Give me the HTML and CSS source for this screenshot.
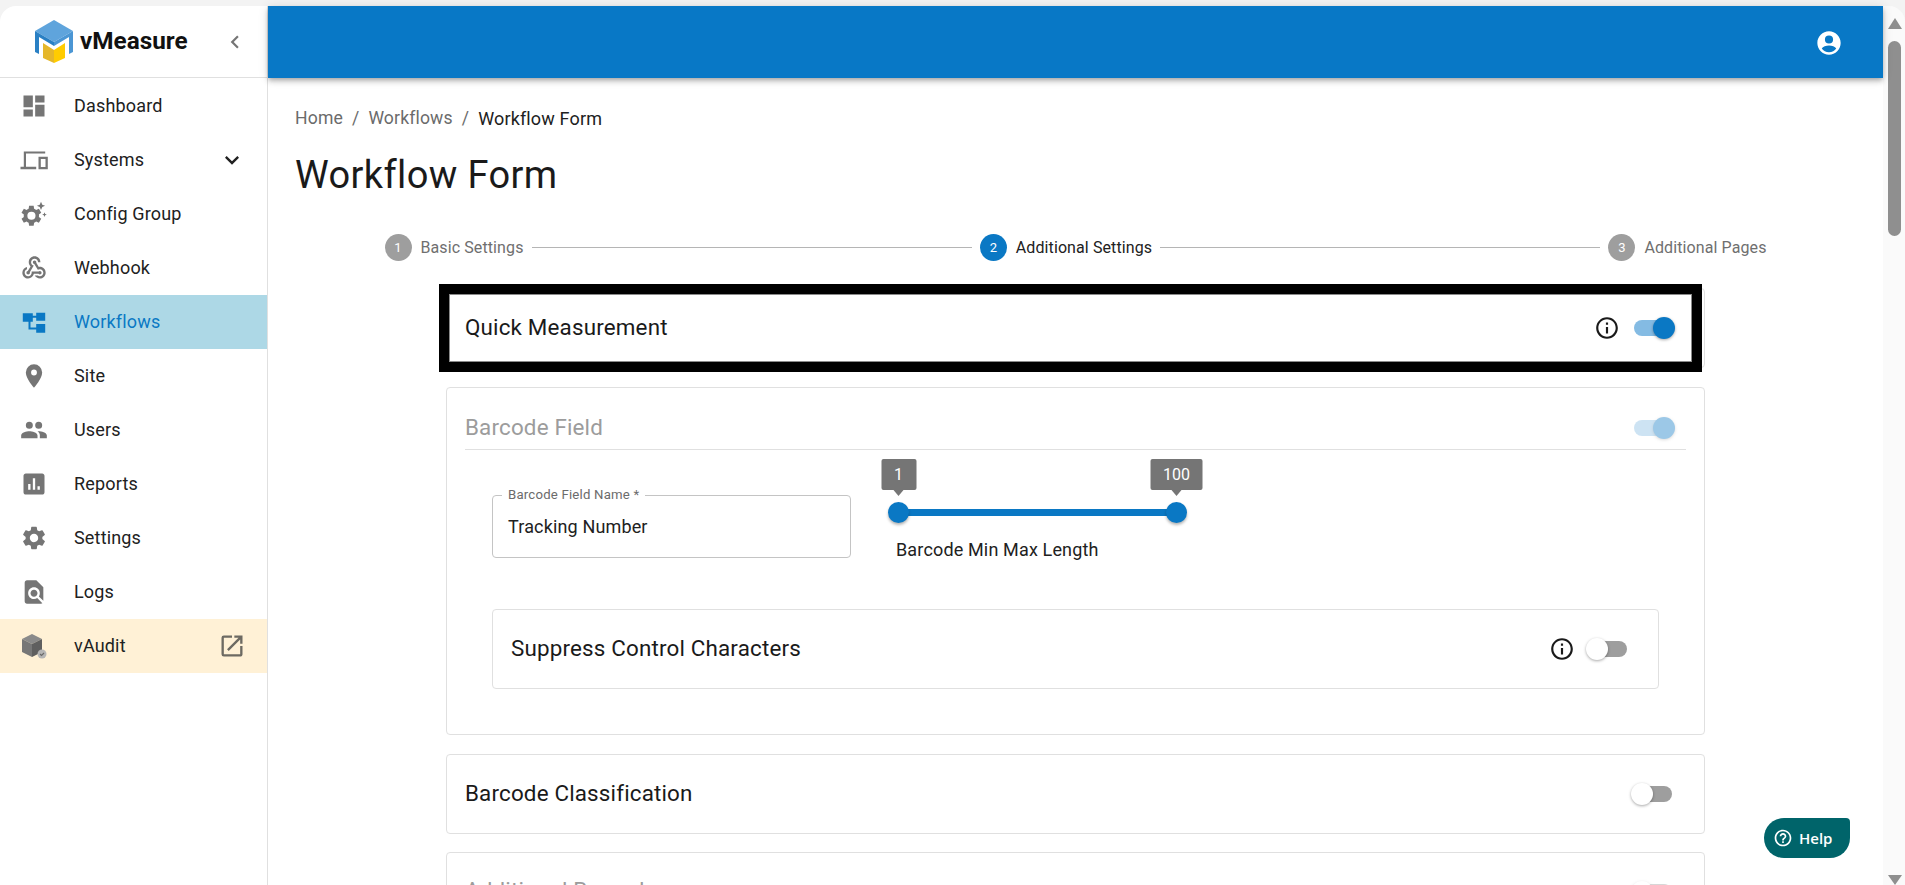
FILE: index.html
```html
<!DOCTYPE html>
<html lang="en">
<head>
<meta charset="utf-8">
<title>Workflow Form</title>
<link rel="stylesheet" href="styles.css">
</head>
<body>
<div class="window">
  <aside class="sidebar">
    <div class="brand">
      <svg class="logo" viewBox="0 0 40 45" width="40" height="45">
        <path d="M20 1 39 12 20 23 1 12Z" fill="#5fa4dc"/>
        <path d="M1 12 20 23v4L5 18v17l-4-2Z" fill="#2a80c4"/>
        <path d="M39 12 20 23v4l15-9v17l4-2Z" fill="#4b96d4"/>
        <path d="M9 24 20 31v13L9 39Z" fill="#e5b72a"/>
        <path d="M31 24 20 31v13l11-5Z" fill="#ffcc00"/>
      </svg>
      <span class="brand-name">vMeasure</span>
      <svg class="collapse" viewBox="0 0 24 24" width="26" height="26"><path d="M15.410 7.410 14 6l-6 6 6 6 1.410-1.410L10.830 12z"/></svg>
    </div>
    <nav class="nav">
      <a class="item"><svg class="ico" viewBox="0 0 24 24"><path d="M3 13h8V3H3v10zm0 8h8v-6H3v6zm10 0h8V11h-8v10zm0-18v6h8V3h-8z"/></svg><span>Dashboard</span></a>
      <a class="item"><svg class="ico" viewBox="0 0 28 28"><path fill-rule="evenodd" d="M3.800 5.500H25.200V7.500H6V20.700H16.200V23.300H.5V20.700H3.800ZM18.500 10.700H27.800V23.300H18.500ZM20.800 13V21H25.500V13Z"/></svg><span>Systems</span><svg class="trail chev" viewBox="0 0 24 24"><path d="M7.410 8.590 12 13.170l4.590-4.580L18 10l-6 6-6-6z"/></svg></a>
      <a class="item"><svg class="ico" viewBox="1 0 24 24"><path d="M19 1.500 20.100 4l2.400 1-2.400 1.100L19 8.500 17.900 6.100 15.500 5l2.400-1zM22 10.500l.6 1.400 1.400.6-1.400.6-.6 1.400-.6-1.400-1.400-.6 1.400-.6zM17.200 14.500c0-.3.1-.7.1-1s0-.7-.1-1l2-1.600-2-3.400-2.400 1a7 7 0 0 0-1.700-1L12.700 5H8.800l-.4 2.500a7 7 0 0 0-1.700 1l-2.400-1-2 3.400 2 1.600c0 .3-.1.700-.1 1s0 .7.100 1l-2 1.600 2 3.400 2.400-1c.5.4 1.100.7 1.700 1l.4 2.500h3.900l.4-2.500c.6-.3 1.200-.6 1.700-1l2.400 1 2-3.400zM10.800 17a3.500 3.500 0 1 1 0-7 3.500 3.500 0 0 1 0 7z"/></svg><span>Config Group</span></a>
      <a class="item"><svg class="ico" viewBox="0 0 24 24"><path d="M10,15l5.880,0c0.270-0.310,0.670-0.500,1.120-0.500c0.830,0,1.500,0.670,1.500,1.500c0,0.830-0.670,1.500-1.500,1.500c-0.440,0-0.840-0.190-1.120-0.500l-3.980,0c-0.460,2.280-2.480,4-4.900,4c-2.760,0-5-2.240-5-5c0-2.420,1.720-4.440,4-4.900l0,2.070C4.840,13.580,4,14.700,4,16c0,1.650,1.350,3,3,3S10,17.650,10,16V15z M12.500,4c1.650,0,3,1.350,3,3h2c0-2.760-2.240-5-5-5l0,0c-2.760,0-5,2.240-5,5c0,1.430,0.600,2.710,1.550,3.620l-2.350,3.900C6.020,14.660,5.500,15.270,5.500,16c0,0.830,0.670,1.500,1.500,1.500s1.500-0.670,1.500-1.500c0-0.160-0.020-0.310-0.070-0.450l3.380-5.630C10.490,9.610,9.500,8.420,9.500,7C9.500,5.350,10.850,4,12.500,4z M17,13c-0.640,0-1.230,0.200-1.720,0.540l-3.050-5.070C11.530,8.350,11,7.740,11,7c0-0.830,0.670-1.500,1.500-1.500S14,6.170,14,7c0,0.150-0.020,0.290-0.060,0.430l2.190,3.650C16.410,11.030,16.700,11,17,11l0,0c2.760,0,5,2.240,5,5c0,2.760-2.240,5-5,5c-1.850,0-3.470-1.010-4.330-2.500l2.670,0C15.820,18.820,16.390,19,17,19c1.650,0,3-1.350,3-3S18.650,13,17,13z"/></svg><span>Webhook</span></a>
      <a class="item active"><svg class="ico" viewBox="0 0 28 28"><path d="M2.800 5.300h10v8.400h-2.300v5.800h5.700v-3.500h9v8.700h-9v-3.200h-7.700v-7.800H2.800zM12.800 7.800h3.400V4.700h9v8h-9V9.800h-3.400z"/></svg><span>Workflows</span></a>
      <a class="item"><svg class="ico" viewBox="0 0 24 24"><path d="M12 2a7 7 0 0 0-7 7c0 5.250 7 13 7 13s7-7.750 7-13a7 7 0 0 0-7-7zm0 9.500a2.500 2.500 0 1 1 0-5 2.500 2.500 0 0 1 0 5z"/></svg><span>Site</span></a>
      <a class="item"><svg class="ico" viewBox="0 0 24 24"><path d="M16 11a3 3 0 1 0 0-6 3 3 0 0 0 0 6zm-8 0a3 3 0 1 0 0-6 3 3 0 0 0 0 6zm0 2c-2.330 0-7 1.170-7 3.500V19h14v-2.500C15 14.170 10.330 13 8 13zm8 0c-.29 0-.62.020-.97.050C16.190 13.890 17 15.020 17 16.500V19h6v-2.500c0-2.330-4.670-3.500-7-3.500z"/></svg><span>Users</span></a>
      <a class="item"><svg class="ico" viewBox="0 0 24 24"><path d="M19 3H5c-1.100 0-2 .9-2 2v14c0 1.100.9 2 2 2h14c1.100 0 2-.9 2-2V5c0-1.100-.9-2-2-2zM9 17H7v-5h2v5zm4 0h-2V7h2v10zm4 0h-2v-3h2v3z"/></svg><span>Reports</span></a>
      <a class="item"><svg class="ico" viewBox="0 0 24 24"><path d="M19.140 12.940c.04-.3.060-.61.060-.94 0-.32-.02-.64-.07-.94l2.030-1.580a.49.49 0 0 0 .12-.61l-1.920-3.320a.488.488 0 0 0-.59-.22l-2.390.96c-.5-.38-1.030-.7-1.620-.94l-.36-2.540a.484.484 0 0 0-.48-.41h-3.840c-.24 0-.43.17-.47.41l-.36 2.540c-.59.24-1.130.57-1.620.94l-2.390-.96c-.22-.08-.47 0-.59.22L2.740 8.870c-.12.21-.08.47.12.61l2.030 1.580c-.05.3-.09.63-.09.94s.020.64.070.94l-2.030 1.580a.49.49 0 0 0-.12.61l1.920 3.320c.12.22.37.29.59.22l2.390-.96c.5.38 1.030.7 1.620.94l.36 2.540c.05.24.24.41.48.41h3.840c.24 0 .44-.17.47-.41l.36-2.540c.59-.24 1.130-.56 1.620-.94l2.390.96c.22.08.47 0 .59-.22l1.920-3.320c.12-.22.070-.47-.12-.61l-2.010-1.580zM12 15.600A3.610 3.610 0 0 1 8.400 12c0-1.980 1.620-3.600 3.600-3.600s3.600 1.620 3.600 3.600-1.620 3.600-3.600 3.600z"/></svg><span>Settings</span></a>
      <a class="item"><svg class="ico" viewBox="0 0 24 24"><path d="M20 19.590V8l-6-6H6c-1.100 0-1.990.9-1.990 2L4 20c0 1.100.89 2 1.990 2H18c.45 0 .85-.15 1.190-.4l-4.430-4.430c-.8.520-1.740.83-2.760.83-2.760 0-5-2.240-5-5s2.240-5 5-5 5 2.240 5 5c0 1.020-.31 1.960-.83 2.770L20 19.590zM9 13c0 1.660 1.340 3 3 3s3-1.340 3-3-1.340-3-3-3-3 1.340-3 3z"/></svg><span>Logs</span></a>
      <a class="item audit"><svg class="ico" viewBox="0 0 28 28"><path d="M12 2 22 7 12 12 2 7Z" fill="#8a8a8a"/><path d="M2 7l10 5v13L2 20Z" fill="#777"/><path d="M22 7 12 12v13l10-5Z" fill="#5f5f5f"/><circle cx="22" cy="22" r="4.500" fill="#b5b5b5"/><path d="M20 22l1.500 1.500 2.500-2.500" fill="none" stroke="#6a6a6a" stroke-width="1.200"/></svg><span>vAudit</span><svg class="trail launch" viewBox="0 0 24 24"><path d="M19 19H5V5h7V3H5a2 2 0 0 0-2 2v14a2 2 0 0 0 2 2h14c1.100 0 2-.9 2-2v-7h-2v7zM14 3v2h3.590l-9.830 9.830 1.410 1.410L19 6.410V10h2V3h-7z"/></svg></a>
    </nav>
  </aside>

  <div class="column">
    <header class="appbar">
      <svg class="account" viewBox="0 0 24 24" width="28" height="28"><path d="M12 2C6.480 2 2 6.480 2 12s4.480 10 10 10 10-4.480 10-10S17.520 2 12 2zm0 3.500a3.500 3.500 0 1 1 0 7 3.500 3.500 0 0 1 0-7zM12 20c-2.600 0-4.900-1.300-6.200-3.300.9-1.500 3.700-2.500 6.200-2.500s5.300 1 6.200 2.500C16.900 18.700 14.600 20 12 20z"/></svg>
    </header>
    <main class="main">
      <div class="crumbs">
        <span class="crumb">Home</span><span class="sep">/</span>
        <span class="crumb">Workflows</span><span class="sep">/</span>
        <span class="crumb current">Workflow Form</span>
      </div>
      <h1 class="title">Workflow Form</h1>

      <div class="stepper">
        <div class="step"><span class="dot">1</span><span class="step-label">Basic Settings</span></div>
        <span class="step-line"></span>
        <div class="step on"><span class="dot">2</span><span class="step-label">Additional Settings</span></div>
        <span class="step-line"></span>
        <div class="step"><span class="dot">3</span><span class="step-label">Additional Pages</span></div>
      </div>

      <div class="stack">
        <section class="card row-card">
          <span class="focus-frame"></span>
          <h2 class="card-title">Quick Measurement</h2>
          <svg class="info" viewBox="0 0 24 24"><path d="M11 7h2v2h-2zm0 4h2v6h-2zm1-9C6.480 2 2 6.480 2 12s4.480 10 10 10 10-4.480 10-10S17.520 2 12 2zm0 18c-4.410 0-8-3.590-8-8s3.590-8 8-8 8 3.590 8 8-3.590 8-8 8z"/></svg>
          <span class="switch checked"><i></i></span>
        </section>

        <section class="card field-card">
          <div class="field-head">
            <h2 class="card-title muted">Barcode Field</h2>
            <span class="switch checked faded"><i></i></span>
          </div>
          <div class="field-body">
            <div class="outlined">
              <span class="outlined-label">Barcode Field Name *</span>
              <span class="outlined-value">Tracking Number</span>
            </div>
            <div class="slider">
              <div class="track">
                <span class="thumb start"><b class="tip">1</b></span>
                <span class="thumb end"><b class="tip">100</b></span>
              </div>
              <div class="slider-label">Barcode Min Max Length</div>
            </div>
          </div>
          <div class="card row-card inner">
            <h2 class="card-title">Suppress Control Characters</h2>
            <svg class="info" viewBox="0 0 24 24"><path d="M11 7h2v2h-2zm0 4h2v6h-2zm1-9C6.480 2 2 6.480 2 12s4.480 10 10 10 10-4.480 10-10S17.520 2 12 2zm0 18c-4.410 0-8-3.590-8-8s3.590-8 8-8 8 3.590 8 8-3.590 8-8 8z"/></svg>
            <span class="switch"><i></i></span>
          </div>
        </section>

        <section class="card row-card">
          <h2 class="card-title">Barcode Classification</h2>
          <span class="switch"><i></i></span>
        </section>

        <section class="card row-card last">
          <h2 class="card-title muted">Additional Records</h2>
          <span class="switch faded"><i></i></span>
        </section>
      </div>
    </main>
    <button class="help"><svg viewBox="0 0 24 24" width="20" height="20"><path d="M11 18h2v-2h-2v2zm1-16C6.480 2 2 6.480 2 12s4.480 10 10 10 10-4.480 10-10S17.520 2 12 2zm0 18c-4.410 0-8-3.590-8-8s3.590-8 8-8 8 3.590 8 8-3.590 8-8 8zm0-14c-2.210 0-4 1.790-4 4h2c0-1.100.9-2 2-2s2 .9 2 2c0 2-3 1.750-3 5h2c0-2.250 3-2.500 3-5 0-2.210-1.790-4-4-4z"/></svg><span>Help</span></button>
  </div>

  <div class="scrollbar">
    <span class="arrow up"></span>
    <span class="bar"></span>
    <span class="arrow down"></span>
  </div>
</div>
</body>
</html>
```
FILE: styles.css
```css
* { box-sizing: border-box; }
html, body { height: 100%; margin: 0; }
body { background: #f3f3f3; overflow: hidden; font-family: Roboto, sans-serif; color: #1a1a1a; }
.window { display: flex; height: 885px; padding-top: 6px; }
.sidebar { width: 268px; flex: none; background: #fff; border-right: 1px solid #e0e0e0; border-top-left-radius: 16px; }
.brand { height: 72px; border-bottom: 1px solid #e0e0e0; display: flex; align-items: center; padding-left: 34px; position: relative; }
.logo { flex: none; margin-top: -1px; }
.brand-name { font-size: 24.300px; font-weight: 700; color: #111; margin-left: 6px; margin-top: -3px; }
.collapse { fill: #757575; position: absolute; left: 222px; top: 23px; }
.nav { display: flex; flex-direction: column; margin-top: 1px; }
.item { height: 54px; display: flex; align-items: center; padding-left: 20px; padding-right: 21px; font-size: 18px; letter-spacing: .17px; color: #212121; }
.item span { margin-top: -2px; }
.ico { width: 28px; height: 28px; fill: #757575; flex: none; margin-right: 26px; }
.trail { margin-left: auto; flex: none; }
.chev { width: 28px; height: 28px; fill: #212121; }
.launch { width: 28px; height: 28px; fill: #6d6a62; }
.item.active { background: #add8e6; color: #0a78c4; }
.item.active .ico { fill: #0a78c4; }
.item.audit { background: #fff1d6; }
.column { flex: 1; min-width: 0; display: flex; flex-direction: column; background: #fff; position: relative; }
.appbar { height: 72px; flex: none; background: #0878c6; box-shadow: 0 2px 4px -1px rgba(0,0,0,.2), 0 4px 5px rgba(0,0,0,.14), 0 1px 10px rgba(0,0,0,.12); display: flex; align-items: center; justify-content: flex-end; padding: 2px 40px 0 0; position: relative; z-index: 2; }
.account { fill: #fff; }
.main { flex: 1; min-height: 0; overflow: hidden; padding: 30px 27px 0; }
.crumbs { display: flex; align-items: center; font-size: 17.600px; letter-spacing: .15px; height: 20px; color: #6b6b6b; }
.sep { margin: 0 9px; }
.crumb.current { color: #212121; font-size: 18px; }
.title { font-size: 38px; font-weight: 400; line-height: 44px; margin: 25px 0 0; letter-spacing: .38px; color: #1a1a1a; }
.stepper { display: flex; align-items: center; width: 1382px; margin: 36px auto 0; height: 28px; }
.step { display: flex; align-items: center; flex: none; }
.dot { width: 27px; height: 27px; border-radius: 50%; background: #9e9e9e; color: #fff; font-size: 13px; display: flex; align-items: center; justify-content: center; }
.step-label { margin-left: 9px; font-size: 16px; letter-spacing: .1px; color: #6f6f6f; }
.step.on .dot { background: #0a78c4; }
.step.on .step-label { color: #212121; }
.step-line { flex: 1; height: 1px; background: #b5b5b5; margin: 0 8px; }
.stack { width: 1259px; margin: 27px auto 0; display: flex; flex-direction: column; gap: 19px; }
.card { border: 1px solid #e0e0e0; border-radius: 4px; background: #fff; position: relative; }
.row-card { height: 80px; flex: none; display: flex; align-items: center; padding: 0 32px 0 18px; }
.row-card.last { margin-top: -1px; }
.card-title { margin: -2px 0 0; font-size: 22.400px; font-weight: 400; letter-spacing: .17px; color: #1a1a1a; flex: 1; }
.card-title.muted { color: #9c9c9c; }
.last .card-title { margin-top: -4px; }
.focus-frame { position: absolute; left: -8px; right: 2px; top: -5px; bottom: -5px; border: 10px solid #000; box-shadow: inset 0 0 0 1px #8a8a8a; pointer-events: none; }
.info { width: 26px; height: 26px; fill: #1a1a1a; flex: none; margin-right: 14px; }
.switch { position: relative; width: 38px; height: 16px; border-radius: 8px; background: #9e9e9e; flex: none; }
.switch i { position: absolute; left: -3px; top: -3px; width: 22px; height: 22px; border-radius: 50%; background: #fff; box-shadow: 0 1px 3px rgba(0,0,0,.35); }
.switch.checked { background: #84bbe3; }
.switch.checked i { left: auto; right: -3px; background: #0a78c4; }
.switch.faded { opacity: .4; }
.field-card { height: 348px; flex: none; padding: 0 18px; }
.field-head { height: 62px; border-bottom: 1px solid #e0e0e0; display: flex; align-items: center; padding: 19px 14px 0 0; }
.field-body { display: flex; padding: 45px 0 0 27px; }
.outlined { width: 359px; height: 63px; border: 1px solid #c4c4c4; border-radius: 4px; position: relative; display: flex; align-items: center; padding-left: 15px; }
.outlined-label { position: absolute; left: 9px; top: -8px; background: #fff; padding: 0 6px; font-size: 13.200px; letter-spacing: .2px; color: #6b6b6b; line-height: 14px; }
.outlined-value { font-size: 18px; letter-spacing: .15px; color: #212121; }
.slider { margin-left: 47px; width: 279px; position: relative; }
.track { height: 7px; background: #0a78c4; border-radius: 4px; margin-top: 14px; position: relative; }
.thumb { position: absolute; top: -7px; width: 21px; height: 21px; border-radius: 50%; background: #0a78c4; box-shadow: 0 2px 3px rgba(0,0,0,.3); }
.thumb.start { left: -10px; }
.thumb.end { right: -10px; }
.tip { position: absolute; left: 50%; bottom: 33px; transform: translateX(-50%); background: #757575; color: #fff; font-size: 16px; font-weight: 400; height: 31px; display: flex; align-items: center; padding: 0 13px; border-radius: 2px; }
.tip::after { content: ""; position: absolute; left: 50%; top: 100%; margin-left: -5px; border: 5px solid transparent; border-top: 6px solid #757575; border-bottom: 0; }
.slider-label { margin: 23px 0 0 -2px; font-size: 18px; letter-spacing: .15px; color: #212121; }
.row-card.inner { margin: 49px 27px 0 27px; padding: 0 31px 0 18px; }
.help { position: absolute; left: 1496px; top: 812px; width: 86px; height: 40px; border: 0; background: #00646a; color: #fff; border-radius: 20px 4px 20px 20px; display: flex; align-items: center; gap: 6px; padding: 0 0 0 9px; font-family: "Open Sans", sans-serif; font-size: 15px; font-weight: 600; z-index: 3; }
.help svg { fill: #fff; }
.scrollbar { width: 22px; flex: none; background: #fafafa; border-top-right-radius: 16px; display: flex; flex-direction: column; align-items: center; padding-top: 12px; }
.bar { width: 13px; height: 195px; background: #8f8f8f; border-radius: 7px; margin-top: 12px; margin-left: 1px; }
.arrow { width: 0; height: 0; border-left: 7px solid transparent; border-right: 7px solid transparent; margin-left: 1px; }
.arrow.up { border-bottom: 11px solid #8f8f8f; }
.arrow.down { border-top: 10px solid #8f8f8f; margin-top: auto; }
```
